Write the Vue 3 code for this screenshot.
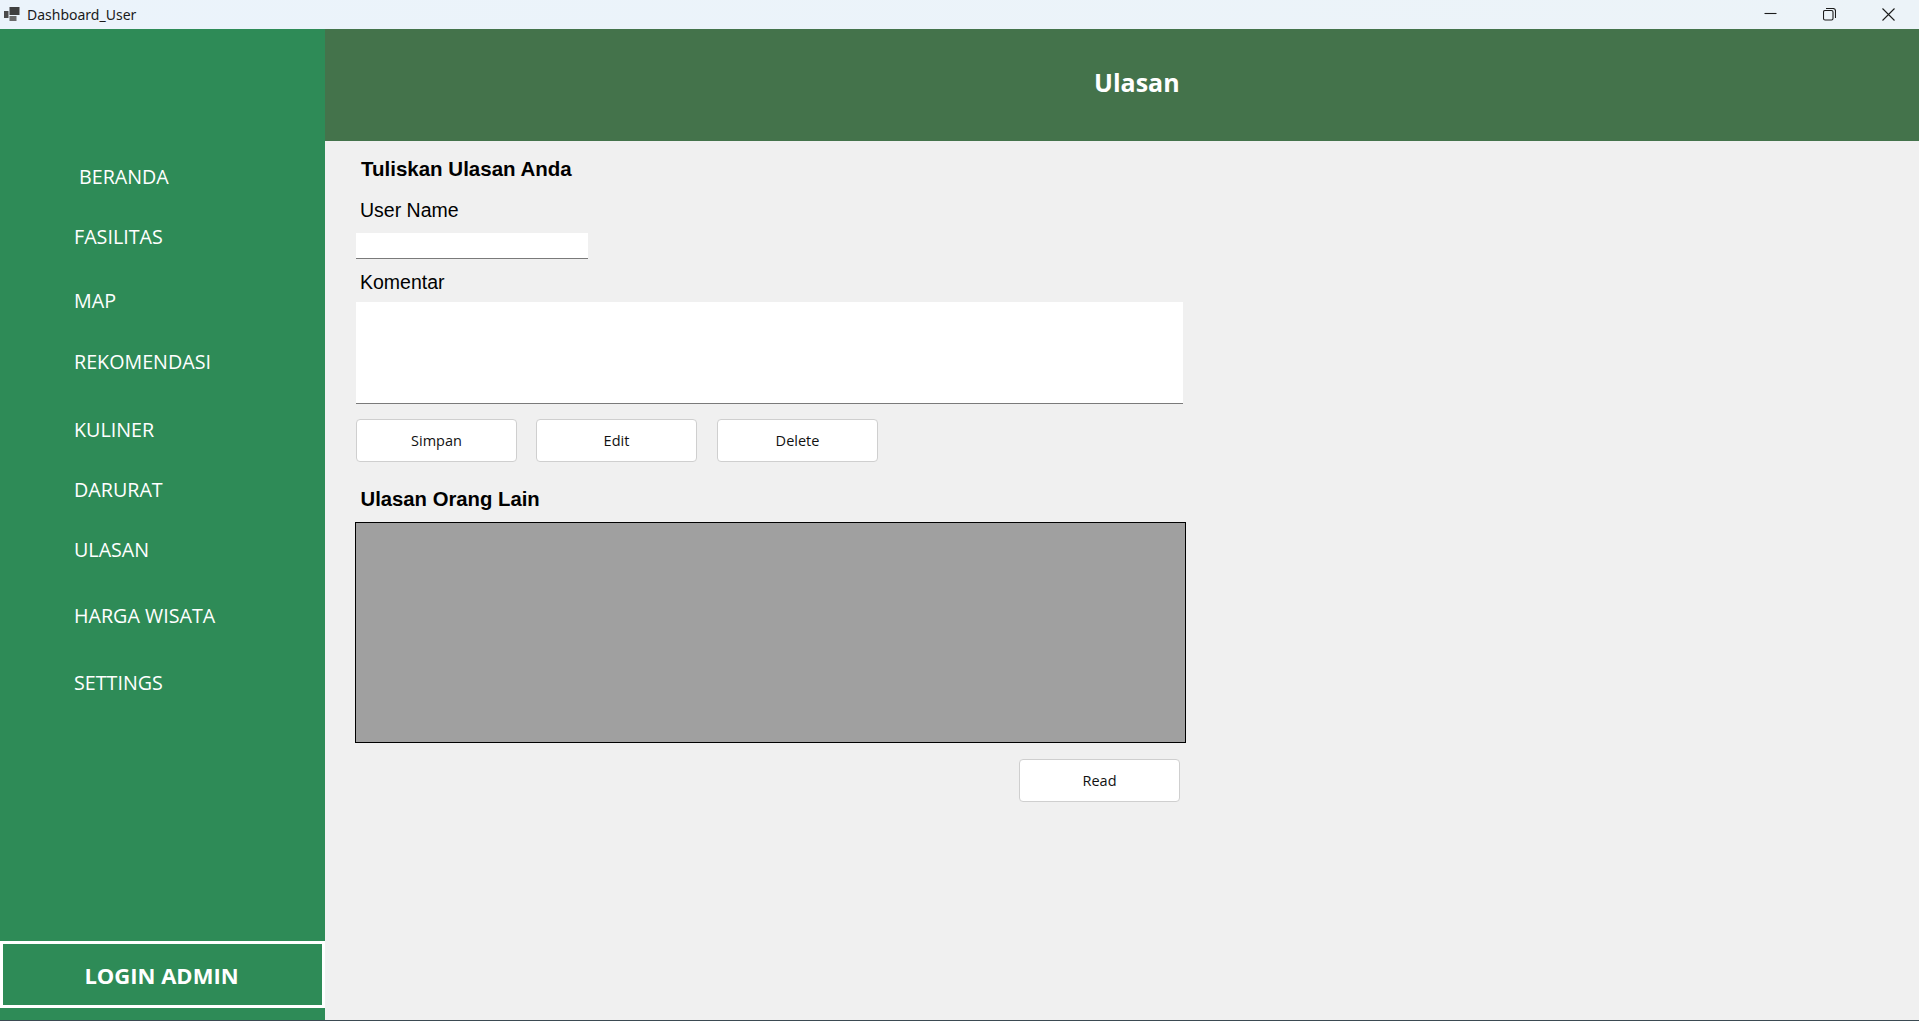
<script setup>
import { ref } from "vue"

const menu = ["BERANDA", "FASILITAS", "MAP", "REKOMENDASI", "KULINER", "DARURAT", "ULASAN", "HARGA WISATA", "SETTINGS"]

const userName = ref("")
const komentar = ref("")
</script>

<template>
  <div class="window">
    <!-- Title bar -->
    <header class="titlebar">
      <div class="title-left">
        <svg class="app-icon" viewBox="0 0 16 14" aria-hidden="true">
          <rect x="0" y="4" width="4.5" height="7" fill="#4a4a4a" />
          <rect x="5.5" y="0" width="10" height="8" fill="#3f3f3f" />
          <rect x="5.5" y="9" width="7" height="5" fill="#6a6a6a" />
        </svg>
        <span class="app-name">Dashboard_User</span>
      </div>
      <div class="controls">
        <svg viewBox="0 0 13 13" aria-hidden="true"><path d="M0.5 5.5h12" /></svg>
        <svg viewBox="0 0 13 13" aria-hidden="true">
          <rect x="0.5" y="2.5" width="9.5" height="9.5" rx="1.5" />
          <path d="M3 0.5h7a2.5 2.5 0 0 1 2.5 2.5v7" />
        </svg>
        <svg viewBox="0 0 13 13" aria-hidden="true"><path d="M0.5 0.5l12 12M12.5 0.5l-12 12" /></svg>
      </div>
    </header>

    <div class="body">
      <!-- Sidebar -->
      <aside class="sidebar">
        <nav class="nav">
          <a v-for="item in menu" :key="item" class="nav-item">{{ item }}</a>
        </nav>
        <button type="button" class="login-btn">LOGIN ADMIN</button>
      </aside>

      <div class="content">
        <div class="page-header">Ulasan</div>

        <main class="form">
          <h2 class="heading">Tuliskan Ulasan Anda</h2>
          <label class="label label-user">User Name</label>
          <input v-model="userName" class="input" type="text" />
          <label class="label label-komentar">Komentar</label>
          <textarea v-model="komentar" class="textarea"></textarea>

          <div class="actions">
            <button type="button" class="btn">Simpan</button>
            <button type="button" class="btn">Edit</button>
            <button type="button" class="btn">Delete</button>
          </div>

          <h2 class="heading heading-other">Ulasan Orang Lain</h2>
          <div class="grid-box"></div>

          <div class="read-row">
            <button type="button" class="btn">Read</button>
          </div>
        </main>
      </div>
    </div>
  </div>
</template>

<style>
html,
body {
  margin: 0;
  overflow: hidden;
}
</style>

<style scoped>
.window {
  width: 1919px;
  height: 1021px;
  display: flex;
  flex-direction: column;
  box-sizing: border-box;
  border-bottom: 1px solid #3b4a52;
  background: #f0f0f0;
  font-family: "Open Sans", "Noto Sans", sans-serif;
}

/* Title bar */
.titlebar {
  height: 29px;
  flex: none;
  display: flex;
  align-items: center;
  justify-content: space-between;
  background: linear-gradient(90deg, #ebf3fb, #ecf3f8);
}

.title-left {
  display: flex;
  align-items: center;
  gap: 7px;
  padding-left: 4px;
}

.app-icon {
  width: 16px;
  height: 14px;
  margin-bottom: 2px;
}

.app-name {
  font-family: "Noto Sans", "Open Sans", sans-serif;
  font-size: 14px;
  color: #1a1a1a;
}

.controls {
  display: flex;
  gap: 46px;
  padding-right: 24px;
}

.controls svg {
  width: 13px;
  height: 13px;
  fill: none;
  stroke: #1c1c1c;
  stroke-width: 1.1;
}

/* Sidebar */
.body {
  flex: 1;
  display: flex;
  min-height: 0;
}

.sidebar {
  width: 325px;
  flex: none;
  display: flex;
  flex-direction: column;
  background: #2e8b57;
}

.nav {
  display: flex;
  flex-direction: column;
  padding: 128px 0 0 74px;
}

.nav-item {
  height: 40px;
  line-height: 40px;
  font-size: 19.7px;
  font-weight: 500;
  color: #fff;
  white-space: nowrap;
}

.nav-item:nth-child(1) { margin-left: 5px; }
.nav-item:nth-child(2) { margin-top: 20px; }
.nav-item:nth-child(3) { margin-top: 24px; }
.nav-item:nth-child(4) { margin-top: 21px; }
.nav-item:nth-child(5) { margin-top: 28px; }
.nav-item:nth-child(6) { margin-top: 20px; }
.nav-item:nth-child(7) { margin-top: 20px; }
.nav-item:nth-child(8) { margin-top: 26px; }
.nav-item:nth-child(9) { margin-top: 27px; }

.login-btn {
  margin-top: auto;
  margin-bottom: 12px;
  height: 67px;
  width: 325px;
  box-sizing: border-box;
  border: 3px solid #fff;
  background: #2e8b57;
  color: #fff;
  font-family: inherit;
  font-size: 22px;
  font-weight: 700;
  padding: 1px 2px 0 0;
}

/* Content */
.content {
  flex: 1;
  display: flex;
  flex-direction: column;
  min-width: 0;
}

.page-header {
  height: 112px;
  box-sizing: border-box;
  flex: none;
  display: flex;
  align-items: center;
  padding: 0 0 7px 769px;
  background: #44734b;
  color: #fff;
  font-size: 25px;
  font-weight: 700;
}

.form {
  display: flex;
  flex-direction: column;
  align-items: flex-start;
  padding: 15px 0 0 31px;
  font-family: "Liberation Sans", Arial, sans-serif;
  color: #000;
}

.heading {
  margin: 0;
  padding-left: 5px;
  font-size: 20.5px;
  line-height: 25px;
  font-weight: 700;
}

.heading-other {
  margin-top: 25px;
  padding-left: 4.5px;
  font-size: 20.3px;
}

.label {
  padding-left: 4px;
  font-size: 19.5px;
  line-height: 24px;
}

.label-user {
  margin-top: 17px;
}

.label-komentar {
  margin-top: 11px;
}

.input,
.textarea {
  display: block;
  box-sizing: border-box;
  border: none;
  border-bottom: 1px solid #7a7a7a;
  background: #fff;
  outline: none;
  padding: 0;
  margin: 0;
  resize: none;
}

.input {
  width: 232px;
  height: 26px;
  margin-top: 11px;
}

.textarea {
  width: 827px;
  height: 102px;
  margin-top: 8px;
}

.actions {
  display: flex;
  gap: 19px;
  margin-top: 15px;
}

.actions .btn:last-child {
  margin-left: 1px;
}

.btn {
  width: 161px;
  height: 43px;
  box-sizing: border-box;
  border: 1px solid #cfcfcf;
  border-radius: 4px;
  background: #fff;
  color: #111;
  font-family: "Open Sans", "Noto Sans", sans-serif;
  font-size: 14.5px;
  padding: 0 0 1px;
}

.grid-box {
  width: 831px;
  height: 221px;
  margin: 10px 0 0 -1px;
  box-sizing: border-box;
  border: 1px solid #000;
  background: #a0a0a0;
}

.read-row {
  width: 824px;
  display: flex;
  justify-content: flex-end;
  margin-top: 16px;
}
</style>
